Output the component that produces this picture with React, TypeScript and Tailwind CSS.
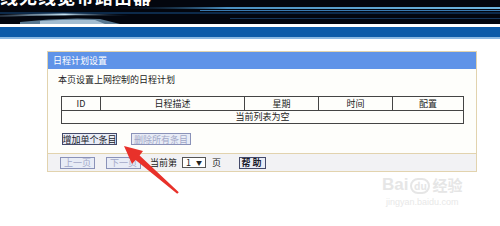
import React from "react"

const font = { fontFamily: '"Noto Sans CJK SC", "Liberation Sans", sans-serif' }

function Banner() {
  return (
    <div className="relative h-[24px] bg-[#02040a] overflow-hidden">
      <svg className="absolute inset-0" width="500" height="24" viewBox="0 0 500 24">
        <defs>
          <linearGradient id="s1" x1="0" x2="1">
            <stop offset="0" stopColor="#0a1a30" stopOpacity="0" />
            <stop offset="0.3" stopColor="#4a8fc0" />
            <stop offset="1" stopColor="#6fb6e0" />
          </linearGradient>
          <linearGradient id="s2" x1="0" x2="1">
            <stop offset="0" stopColor="#9fc8e8" stopOpacity="0.2" />
            <stop offset="0.5" stopColor="#c8e4f4" />
            <stop offset="1" stopColor="#1a3a60" stopOpacity="0" />
          </linearGradient>
        </defs>
        <rect x="0" y="0" width="500" height="24" fill="#03060e" />
        <rect x="110" y="7" width="390" height="2" fill="url(#s1)" />
        <rect x="200" y="10" width="300" height="1" fill="#3a7ab0" />
        <rect x="0" y="12" width="500" height="2" fill="#0d2a4a" />
        <path d="M0 15 Q60 12 130 15 L130 16 Q60 14 0 17 Z" fill="url(#s2)" />
        <path d="M20 22 Q60 17 100 19 L120 24 L20 24 Z" fill="#7fa9c8" opacity="0.7" />
        <path d="M40 21 Q70 19 95 20 L105 24 L40 24 Z" fill="#c6dced" opacity="0.7" />
        <rect x="230" y="18" width="270" height="1" fill="#16365a" />
      </svg>
      <div
        className="relative mt-[-14px] whitespace-nowrap text-[18px] font-bold leading-[20px] text-white tracking-[1px]"
        style={font}
      >
        线无线宽带路由器
      </div>
    </div>
  )
}

function Btn({ children, disabled, className = "" }: { children: React.ReactNode; disabled?: boolean; className?: string }) {
  return (
    <button
      type="button"
      className={`flex h-[12px] items-center justify-center overflow-hidden whitespace-nowrap border p-0 bg-[#e8ecf6] text-[9px] leading-none ${
        disabled ? "border-[#8a92b8] text-[#a2a8c8]" : "border-[#444a6a] text-[#1a1a2a]"
      } ${className}`}
      style={font}
    >
      {children}
    </button>
  )
}

export default function App() {
  return (
    <div className="relative w-[500px] h-[226px] overflow-hidden bg-white" style={font}>
      <Banner />
      <div className="h-[3px] bg-white" />
      <div className="h-[10px] bg-[#0c5aa8]" />
      <div className="h-[2px] bg-[#8ab8e2]" />

      {/* Panel */}
      <div className="ml-[47px] mt-[12px] w-[430px] border border-[#e2d3ae] bg-[#fefefb]">
        <div className="flex h-[17px] items-center bg-[#5f93e8] pl-[5px] text-[9px] text-white">日程计划设置</div>
        <div className="px-[13px]">
          <div className="ml-[-3px] mt-[5px] h-[12px] whitespace-nowrap text-[9px] leading-[12px] text-[#222]">本页设置上网控制的日程计划</div>
          <div className="mt-[10px] w-[403px] border border-[#444] text-[9px] text-[#222]">
            <div className="grid h-[14px] grid-cols-[38px_144px_74px_74px_1fr] border-b border-[#444] leading-[13px]">
              <div className="text-center">ID</div>
              <div className="border-l border-[#444] text-center">日程描述</div>
              <div className="border-l border-[#444] text-center">星期</div>
              <div className="border-l border-[#444] text-center">时间</div>
              <div className="border-l border-[#444] text-center">配置</div>
            </div>
            <div className="h-[12px] text-center leading-[12px]">当前列表为空</div>
          </div>
          <div className="mt-[9px] flex gap-[14px] pl-[1px]">
            <Btn className="w-[55px]">增加单个条目</Btn>
            <Btn disabled className="w-[60px]">删除所有条目</Btn>
          </div>
        </div>
        <div className="mt-[8px] flex h-[18px] items-center border-t border-[#e2d3ae] bg-[#f2f2f4] pl-[12px] text-[9px] text-[#222]">
          <Btn disabled className="h-[10px] w-[35px]">上一页</Btn>
          <Btn disabled className="ml-[11px] h-[10px] w-[35px]">下一页</Btn>
          <span className="ml-[9px]">当前第</span>
          <div className="ml-[5px] flex h-[11px] w-[24px] items-center justify-between border border-[#555] bg-white px-[3px] text-[9px] leading-none">
            <span>1</span>
            <span className="text-[6px]">▼</span>
          </div>
          <span className="ml-[6px]">页</span>
          <Btn className="ml-[18px] h-[11px] w-[27px] font-bold tracking-[2px]">帮助</Btn>
        </div>
      </div>

      {/* red annotation arrow */}
      <svg className="absolute left-0 top-0" width="500" height="226" viewBox="0 0 500 226">
        <polygon
          points="124,146 143,151 139.6,155.5 178.8,192.3 177.2,193.7 135.6,160.1 132,164"
          fill="#e8312a"
        />
      </svg>

      {/* watermark */}
      <div className="absolute left-[382px] top-[176px] flex flex-col items-center text-[#e6e6e6]">
        <div className="flex items-end gap-[2px]">
          <span className="text-[17px] font-bold leading-[18px]" style={{ fontFamily: '"Liberation Sans", sans-serif' }}>
            Bai
          </span>
          <span className="flex h-[16px] w-[20px] items-center justify-center rounded-full border-2 border-[#e6e6e6] text-[10px] font-bold leading-none">
            du
          </span>
          <span className="text-[15px] font-bold leading-[18px]">经验</span>
        </div>
        <div className="mt-[3px] text-[9px] leading-[10px] text-[#e8e8e8]" style={{ fontFamily: '"Liberation Sans", sans-serif' }}>
          jingyan.baidu.com
        </div>
      </div>
    </div>
  )
}
